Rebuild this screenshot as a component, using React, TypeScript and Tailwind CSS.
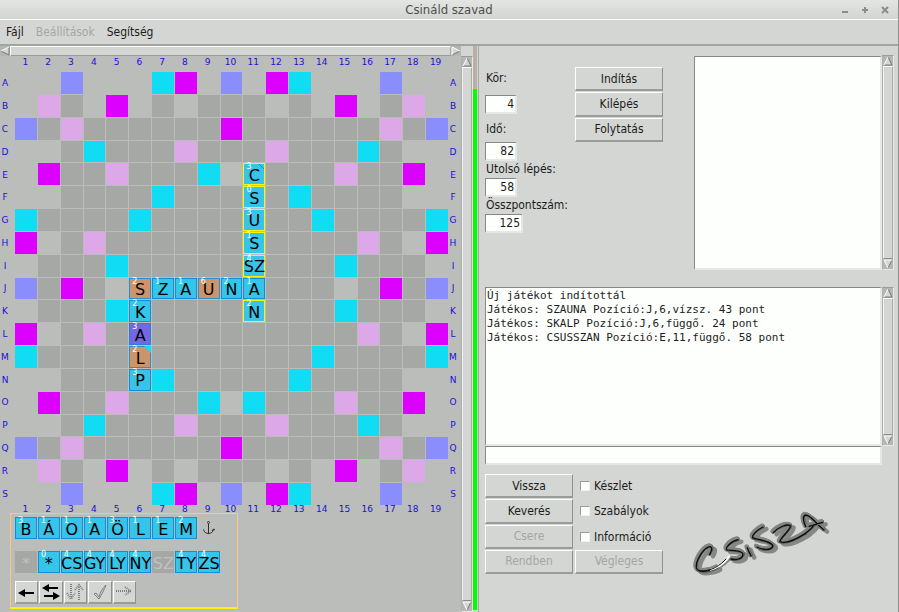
import React from "react";

const HALF = [
  "..b...cm.b.mc...b..",
  ".pg.m.g.ggg.g.m.gp.",
  "bgpggggggmggggggpgb",
  "..gcgggpgggpgggcg..",
  ".mggpgggc.cgggpggm.",
  "..ggggcgggggcgggg..",
  "cggggcgggggggcggggc",
  "m.gpgggggggggggpg.m",
  ".gggcgggggggggcggg.",
];
const BOARD = [...HALF, "bgmg.ggggggggg.gmgb", ...[...HALF].reverse()];
const ROWS = "ABCDEFGHIJKLMNOPQRS".split("");
const COLS = Array.from({ length: 19 }, (_, i) => i + 1);

const CELL: Record<string, string> = {
  ".": "bg-[#bbbdbb]",
  g: "bg-[#a6a8a6]",
  c: "bg-[#10dcf4]",
  m: "bg-[#dc00ff]",
  p: "bg-[#dca8e8]",
  b: "bg-[#8a8efc]",
};

type Kind = "blue" | "new" | "joker" | "purple" | "off";
type TileData = { l: string; n?: number; k: Kind; corner?: "line" | "cyan" };

const KIND: Record<Kind, string> = {
  blue: "bg-[#36c4e8] border-[#0d8fdc] text-black",
  new: "bg-[#36c4e8] border-[#fff200] text-black",
  joker: "bg-[#cc946a] border-[#2a8fd0] text-black",
  purple: "bg-[#7468e2] border-[#2a7fd8] text-black",
  off: "bg-[#a6a8a6] border-[#a6a8a6] text-[#bfc1bf]",
};

const PLACED: Record<string, TileData> = {
  E11: { l: "C", n: 3, k: "new", corner: "line" },
  F11: { l: "S", n: 0, k: "new" },
  G11: { l: "U", n: 3, k: "new" },
  H11: { l: "S", n: 1, k: "new" },
  I11: { l: "SZ", n: 4, k: "new" },
  J11: { l: "A", n: 1, k: "blue" },
  K11: { l: "N", n: 2, k: "new" },
  J6: { l: "S", n: 2, k: "joker" },
  J7: { l: "Z", n: 1, k: "blue" },
  J8: { l: "A", n: 1, k: "blue" },
  J9: { l: "U", n: 6, k: "joker" },
  J10: { l: "N", n: 2, k: "blue" },
  K6: { l: "K", n: 2, k: "blue" },
  L6: { l: "A", n: 3, k: "purple" },
  M6: { l: "L", n: 2, k: "joker", corner: "cyan" },
  N6: { l: "P", n: 3, k: "blue" },
};

const RACK: TileData[] = [
  { l: "B", n: 3, k: "blue" },
  { l: "Á", n: 1, k: "blue" },
  { l: "O", n: 1, k: "blue" },
  { l: "A", n: 1, k: "blue" },
  { l: "Ö", n: 3, k: "blue" },
  { l: "L", n: 1, k: "blue" },
  { l: "E", n: 1, k: "blue" },
  { l: "M", n: 2, k: "blue" },
];
const DIGRAPHS: TileData[] = [
  { l: "*", k: "off" },
  { l: "*", n: 0, k: "blue" },
  { l: "CS", n: 4, k: "blue" },
  { l: "GY", n: 4, k: "blue" },
  { l: "LY", n: 4, k: "blue" },
  { l: "NY", n: 4, k: "blue" },
  { l: "SZ", k: "off" },
  { l: "TY", n: 4, k: "blue" },
  { l: "ZS", n: 4, k: "blue" },
];

const LOG = `Új játékot indítottál
Játékos: SZAUNA Pozíció:J,6,vízsz. 43 pont
Játékos: SKALP Pozíció:J,6,függő. 24 pont
Játékos: CSUSSZAN Pozíció:E,11,függő. 58 pont`;

const RAISED =
  "border border-b-2 border-t-white border-l-white border-r-[#8f918f] border-b-[#9a9c9a]";
const SUNKEN =
  "border border-r-2 border-b-2 border-t-[#858785] border-l-[#8b8985] border-r-[#e6e8e6] border-b-[#e6e8e6] bg-[#fdfffd]";

function Tile({ t }: { t: TileData }) {
  return (
    <div className={`relative flex items-center justify-center border ${KIND[t.k]}`}>
      <span className="pt-[3px] font-['DejaVu_Sans',sans-serif] text-[16px] leading-4">{t.l}</span>
      {t.n !== undefined && (
        <span className="absolute left-0.5 -top-px font-['DejaVu_Sans',sans-serif] text-[8px] leading-2 text-white">{t.n}</span>
      )}
      {t.corner && (
        <svg viewBox="0 0 7 7" className="absolute -right-px -top-px size-[7px]">
          {t.corner === "cyan" ? (
            <path d="M0 0H7V7Z" fill="#10dcf4" />
          ) : (
            <path d="M1 1L6 6" stroke="#0d8fdc" strokeWidth="1" />
          )}
        </svg>
      )}
    </div>
  );
}

function ColumnNumbers({ className }: { className: string }) {
  return (
    <div className={`ml-[14px] grid w-[433px] grid-cols-19 text-center font-['DejaVu_Sans',sans-serif] text-[9px] text-[#1a10d8] ${className}`}>
      {COLS.map((c) => (
        <span key={c}>{c}</span>
      ))}
    </div>
  );
}

function RowLetters() {
  return (
    <div className="grid w-[10px] grid-rows-19 items-center text-center font-['DejaVu_Sans',sans-serif] text-[9px] leading-[10px] text-[#1a10d8]">
      {ROWS.map((r) => (
        <span key={r}>{r}</span>
      ))}
    </div>
  );
}

function Arrow({ dir }: { dir: "up" | "down" | "left" | "right" }) {
  const label = { up: "Fel", down: "Le", left: "Balra", right: "Jobbra" }[dir];
  const fill = {
    up: "M5 1L9 9H1Z",
    down: "M1 1H9L5 9Z",
    left: "M1 5L9 1V9Z",
    right: "M9 5L1 1V9Z",
  }[dir];
  const light = { up: "M1 9L5 1", down: "M5 9L1 1H9", left: "M1 5L9 1", right: "M1 9V1L9 5" }[dir];
  const dark = { up: "M5 1L9 9H1", down: "M9 1L5 9", left: "M1 5L9 9V1", right: "M1 9L9 5" }[dir];
  return (
    <button aria-label={label} className="block size-[10px] shrink-0 bg-[#b4b6b4]">
      <svg viewBox="0 0 10 10" className="size-[10px]" fill="none">
        <path d={fill} fill="#d4d6d4" />
        <path d={dark} stroke="#767876" />
        <path d={light} stroke="#ffffff" />
      </svg>
    </button>
  );
}

function VScroll({ className = "" }: { className?: string }) {
  return (
    <div className={`flex w-3 flex-col items-center border border-t-[#9b9d9b] border-l-[#aeb0ae] border-r-[#e8eae8] border-b-[#e8eae8] ${className}`}>
      <Arrow dir="up" />
      <div className="w-[10px] flex-1 border border-t-white border-l-[#f0f2f0] border-r-[#a8aaa8] border-b-[#8a8c8a]" />
      <Arrow dir="down" />
    </div>
  );
}

function PushButton({ children, disabled }: { children: React.ReactNode; disabled?: boolean }) {
  return (
    <button
      disabled={disabled}
      className={`flex items-center justify-center bg-[#d4d6d4] text-xs leading-4 text-[#1c1c1c] disabled:text-[#a4a6a4] ${RAISED}`}
    >
      {children}
    </button>
  );
}

function Field({ id, label, value, width }: { id: string; label: string; value: string; width: string }) {
  return (
    <div className="flex flex-col items-start gap-px">
      <label htmlFor={id} className="pl-px text-xs leading-4">
        {label}
      </label>
      <input id={id} readOnly defaultValue={value} className={`h-[19px] px-px text-right text-xs ${SUNKEN} ${width}`} />
    </div>
  );
}

function ToolButton({ label, disabled, children }: { label: string; disabled?: boolean; children: React.ReactNode }) {
  return (
    <button
      aria-label={label}
      disabled={disabled}
      className={`flex h-[23px] items-center justify-center bg-[#d4d6d4] text-black disabled:text-[#7c7e7c] ${RAISED}`}
    >
      <svg viewBox="0 0 20 20" className="size-5 shrink-0" fill="none" stroke="currentColor" strokeWidth="2">
        {children}
      </svg>
    </button>
  );
}

const STROKES = [
  "M86 384Q98 362 86 361C66 366 44 402 46 424C50 442 92 434 108 424",
  "M171 340C150 344 130 366 138 371C152 372 186 372 186 384C184 398 166 402 150 398",
  "M199 364Q203 376 210 388",
  "M246 302C228 310 210 328 216 335C234 340 276 346 275 360C268 374 242 370 228 362",
  "M277 318C292 302 318 292 328 298C330 310 300 332 296 346C316 354 344 340 372 322",
  "M372 322C384 312 390 308 396 300M374 300C366 284 364 268 374 266C390 266 400 288 428 310M384 300L424 288",
];

function Logo() {
  return (
    <svg viewBox="30 249 420 210" className="h-[70px] w-[140px]" fill="none" strokeLinecap="round" strokeLinejoin="round" role="img" aria-label="CS,SZA">
      <g transform="translate(13 10)" stroke="#868886" strokeWidth="13">
        {STROKES.map((d) => (
          <path key={d} d={d} />
        ))}
      </g>
      <path d="M66 444C96 446 132 426 156 396" stroke="#7e807e" strokeWidth="5" />
      <g transform="translate(2 2)" stroke="#555755" strokeWidth="13">
        {STROKES.map((d) => (
          <path key={d} d={d} />
        ))}
      </g>
      <g stroke="#828482" strokeWidth="12">
        {STROKES.map((d) => (
          <path key={d} d={d} />
        ))}
      </g>
      <g transform="translate(3 4)" stroke="#0c0c0c" strokeWidth="4">
        {STROKES.map((d) => (
          <path key={d} d={d} />
        ))}
      </g>
      <path d="M92 434C116 428 132 414 148 394" stroke="#ffffff" strokeWidth="6" />
      <path d="M58 438C96 440 122 420 138 402" stroke="#101010" strokeWidth="3" />
    </svg>
  );
}

function Check({ label }: { label: string }) {
  return (
    <label className="flex items-center gap-1 pl-[5px] leading-4">
      <input
        type="checkbox"
        className="size-[10px] appearance-none border border-t-[#9a9c9a] border-l-[#9a9c9a] border-r-[#f0f2f0] border-b-[#f0f2f0] bg-[#fdfffd]"
      />
      {label}
    </label>
  );
}

export default function App() {
  return (
    <div className="flex min-h-screen flex-col border-r border-[#8e908e] bg-[#d4d6d4] font-['DejaVu_Sans_Condensed','DejaVu_Sans',sans-serif] text-[#1c1c1c]">
      <header className="flex h-5 items-center border-b border-white bg-linear-to-b from-[#e4e6e4] to-[#d2d4d2]">
        <div className="w-16" />
        <h1 className="flex-1 text-center text-[13px] leading-4 text-[#4c4e4c]">Csináld szavad</h1>
        <div className="flex w-16 gap-[10px] pl-[6px] text-[#8a8c8a]">
          <button aria-label="Kis méret" className="size-[10px]">
            <svg viewBox="0 0 10 10" stroke="currentColor" strokeWidth="2"><path d="M2 7H8" /></svg>
          </button>
          <button aria-label="Teljes méret" className="size-[10px]">
            <svg viewBox="0 0 10 10" stroke="currentColor" strokeWidth="2"><path d="M2 5H8M5 2V8" /></svg>
          </button>
          <button aria-label="Bezárás" className="size-[10px]">
            <svg viewBox="0 0 10 10" stroke="currentColor" strokeWidth="2"><path d="M2 2L8 8M8 2L2 8" /></svg>
          </button>
        </div>
      </header>

      <nav className="flex h-[26px] items-center gap-3 border-b-2 border-[#a4a3a4] pl-[6px] text-xs leading-4">
        <button>Fájl</button>
        <button disabled className="text-[#a4a6a4]">Beállítások</button>
        <button>Segítség</button>
      </nav>

      <main className="flex flex-1">
        <section className="flex w-[473px] shrink-0">
          <div className="flex flex-1 flex-col bg-[#bbbdbb]">
            <div className="flex h-[10px] bg-[#d4d6d4]">
              <Arrow dir="left" />
              <div className="flex-1 border border-t-white border-l-white border-r-[#a8aaa8] border-b-[#a09a96]" />
              <Arrow dir="right" />
            </div>
            <div className="flex flex-1 flex-col">
              <ColumnNumbers className="h-4 leading-[13px]" />
              <div className="flex h-[433px]">
                <RowLetters />
                <div className="ml-[5px] grid w-[433px] grid-cols-19 grid-rows-19 gap-px">
                  {BOARD.map((row, y) =>
                    row.split("").map((c, x) => {
                      const key = ROWS[y] + (x + 1);
                      return PLACED[key] ? (
                        <Tile key={key} t={PLACED[key]} />
                      ) : (
                        <div key={key} className={CELL[c]} />
                      );
                    })
                  )}
                </div>
                <RowLetters />
              </div>
              <ColumnNumbers className="h-2 leading-2" />
              <div className="ml-[10px] flex w-[228px] flex-col border border-b-2 border-[#ffc880] border-b-[#fff200] py-[3px] pl-1">
                <div className="grid h-[22px] w-[205px] grid-cols-9 gap-px">
                  {RACK.map((t, i) => (
                    <Tile key={i} t={t} />
                  ))}
                  <div className="flex items-center justify-center">
                    <svg viewBox="0 0 14 16" className="h-4 w-[14px]" fill="none" stroke="#2c2c2c">
                      <circle cx="6.500" cy="2.500" r="1" />
                      <path d="M6.500 4V13.500M1.500 9.500C2 12 4 13.500 6.500 13.500S11 12 11.500 9.500M10 11L11.500 9L13 10" />
                    </svg>
                  </div>
                </div>
                <div className="mt-3 grid h-[22px] w-[205px] grid-cols-9 gap-px">
                  {DIGRAPHS.map((t, i) => (
                    <Tile key={i} t={t} />
                  ))}
                </div>
                <div className="mt-2 grid w-[121px] grid-cols-5 gap-px">
                  <ToolButton label="Vissza egyet">
                    <path d="M6 11H17" strokeWidth="2" />
                    <path d="M1 11L8 7V15Z" fill="currentColor" stroke="none" />
                  </ToolButton>
                  <ToolButton label="Csere">
                    <path d="M6 6H17M3 14H14" strokeWidth="2" />
                    <path d="M1 6L8 2V10ZM19 14L12 10V18Z" fill="currentColor" stroke="none" />
                  </ToolButton>
                  <ToolButton label="Rendezés" disabled>
                    <path d="M6 2V15M14 5V18" strokeDasharray="1 1" />
                    <path d="M2 11L6 17L10 11M10 8L14 3L18 8" strokeDasharray="1 1" />
                  </ToolButton>
                  <ToolButton label="Elfogad" disabled>
                    <path d="M4 12L6 11L9 15C10 10 13 6 16 3C14 8 12 12 9 17Z" strokeWidth="1" />
                  </ToolButton>
                  <ToolButton label="Tovább" disabled>
                    <path d="M2 9H18" strokeDasharray="1 1" />
                    <path d="M11 5L17 9L11 13" strokeDasharray="1 1" />
                  </ToolButton>
                </div>
              </div>
            </div>
          </div>
          <VScroll className="mt-[10px]" />
        </section>

        <div className="flex w-[6px] shrink-0 flex-col border-r border-[#a8a6a6] pb-[2px]">
          <div className="h-[43px] w-1 bg-[#b8b0a8]" />
          <div className="w-1 flex-1 bg-[#00ff00]" />
        </div>

        <section className="flex min-w-0 flex-1 flex-col pl-[6px] pr-1">
          <div className="flex h-[241px]">
            <div className="flex w-[90px] shrink-0 flex-col pt-6">
              <div className="flex flex-col gap-[7px]">
                <Field id="kor" label="Kör:" value="4" width="mt-2 w-8" />
                <Field id="ido" label="Idő:" value="82" width="mt-1 w-8" />
              </div>
              <Field id="utolso" label="Utolsó lépés:" value="58" width="w-8" />
              <Field id="ossz" label="Összpontszám:" value="125" width="w-[38px]" />
            </div>
            <div className="mt-[21px] grid h-[75px] w-[88px] shrink-0 grid-rows-3 gap-px">
              <PushButton>Indítás</PushButton>
              <PushButton>Kilépés</PushButton>
              <PushButton>Folytatás</PushButton>
            </div>
            <textarea aria-label="Szólista" readOnly className={`ml-[31px] mt-[10px] h-[214px] min-w-0 flex-1 resize-none overflow-hidden ${SUNKEN}`} />
            <VScroll className="mt-[9px] h-[215px]" />
          </div>

          <div className="flex h-[159px]">
            <textarea
              aria-label="Napló"
              readOnly
              defaultValue={LOG}
              className={`min-w-0 flex-1 resize-none overflow-hidden whitespace-pre px-px pt-px font-['DejaVu_Sans_Mono',monospace] text-[11px] leading-[14px] ${SUNKEN}`}
            />
            <VScroll />
          </div>
          <input aria-label="Üzenet" className={`mr-3 h-[19px] ${SUNKEN}`} />

          <div className="mt-[9px] flex">
            <div className="grid h-[100px] w-[178px] shrink-0 grid-cols-2 grid-rows-4 gap-x-[2px] gap-y-px text-xs">
              <PushButton>Vissza</PushButton>
              <Check label="Készlet" />
              <PushButton>Keverés</PushButton>
              <Check label="Szabályok" />
              <PushButton disabled>Csere</PushButton>
              <Check label="Információ" />
              <PushButton disabled>Rendben</PushButton>
              <PushButton disabled>Végleges</PushButton>
            </div>
            <div className="ml-[27px] mt-[34px]">
              <Logo />
            </div>
          </div>
        </section>
      </main>
    </div>
  );
}
